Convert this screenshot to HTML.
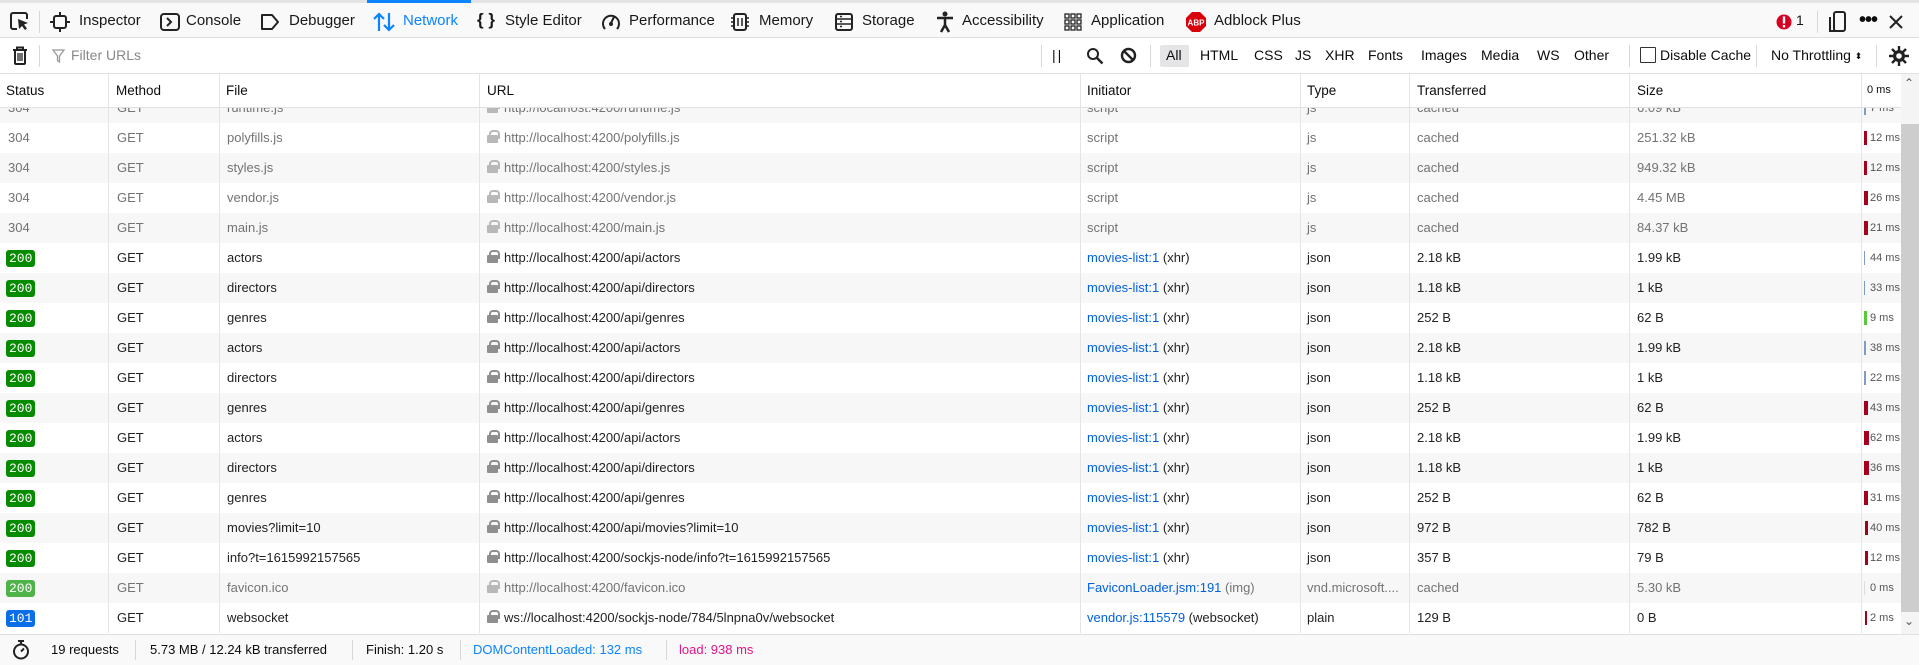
<!DOCTYPE html>
<html><head><meta charset="utf-8"><style>
*{box-sizing:border-box;margin:0;padding:0}
body{width:1919px;height:665px;overflow:hidden;background:#fff;font-family:"Liberation Sans",sans-serif;font-size:14px;color:#0c0c0d;position:relative}
.a{position:absolute;white-space:nowrap}
#tb{position:absolute;left:0;top:0;width:1919px;height:38px;background:#f9f9fa;border-top:3px solid #e4e4e6;border-bottom:1px solid #e0e0e2}
#fb{position:absolute;left:0;top:38px;width:1919px;height:36px;background:#fff;border-bottom:1px solid #e0e0e2}
.t{top:9px;font-size:15px;color:#18181a}
.sep{position:absolute;width:1px;background:#d7d7db}
#hd{position:absolute;left:0;top:74px;width:1901px;height:34px;background:#fff;border-bottom:1px solid #e0e0e2;z-index:2;font-size:13.5px}
.row{position:absolute;left:0;width:1901px;height:30px;font-size:13px;color:#222}
.row.g{background:#f7f7f7}
.c{position:absolute;top:0;height:30px;line-height:30px;white-space:nowrap;overflow:hidden;border-right:1px solid #e4e4e6}
.row.gr{color:#737373}
.b{display:inline-block;color:#fff;font-family:"Liberation Mono",monospace;font-size:13px;line-height:17px;padding:0 3px;border-radius:3px;margin-top:6px;background:#058b00}
.lk{display:inline-block;width:11px;height:13px;margin-right:6px;vertical-align:-1px;position:relative}
.lk:before{content:"";position:absolute;left:2px;top:0;width:7px;height:7px;border:2px solid #8f8f8f;border-radius:4px 4px 0 0;border-bottom:none}
.lk:after{content:"";position:absolute;left:0;top:5px;width:11px;height:8px;background:#8f8f8f;border-radius:1px}
.lk.l:before{border-color:#b8b8b8}.lk.l:after{background:#b8b8b8}
.u{color:#0060df}
.w{font-size:11px;padding-left:8px;position:relative;color:#555!important}
.w i{position:absolute;left:2px;top:8px;height:14px;width:2px}
</style></head><body>
<div id="tb"></div>
<div class="a" style="left:367px;top:0;width:104px;height:3px;background:#0a84ff"></div>
<div style="position:absolute;left:0;top:3px;width:1919px;height:35px">
<svg class="a" style="left:9px;top:8px" width="22" height="22" viewBox="0 0 22 22"><path d="M8 18H4a2 2 0 0 1-2-2V4a2 2 0 0 1 2-2h12a2 2 0 0 1 2 2v4" fill="none" stroke="#222" stroke-width="2"/><path d="M9 8l10 4-4 1.5 3 4-2 1.5-3-4-3 3z" fill="#222"/></svg>
<div class="sep" style="left:39px;top:8px;height:22px"></div>
<svg class="a" style="left:50px;top:9px" width="20" height="20" viewBox="0 0 20 20"><rect x="4" y="4" width="12" height="12" rx="2" fill="none" stroke="#222" stroke-width="2"/><path d="M10 0v4M10 16v4M0 10h4M16 10h4" stroke="#222" stroke-width="2"/></svg>
<div class="a t" style="left:79px">Inspector</div>
<svg class="a" style="left:160px;top:9px" width="20" height="20" viewBox="0 0 20 20"><rect x="1" y="2" width="18" height="16" rx="3" fill="none" stroke="#222" stroke-width="2"/><path d="M7 6l4 4-4 4" fill="none" stroke="#222" stroke-width="2"/></svg>
<div class="a t" style="left:186px">Console</div>
<svg class="a" style="left:260px;top:10px" width="20" height="18" viewBox="0 0 20 18"><path d="M2 2h10l6 7-6 7H2z" fill="none" stroke="#222" stroke-width="2" stroke-linejoin="round"/></svg>
<div class="a t" style="left:289px">Debugger</div>
<svg class="a" style="left:373px;top:9px" width="22" height="20" viewBox="0 0 22 20"><path d="M6 19V2M1 7l5-5 5 5M16 1v17M11 13l5 5 5-5" fill="none" stroke="#0a84ff" stroke-width="2.2"/></svg>
<div class="a t" style="left:403px;color:#0a84ff">Network</div>
<div class="a t" style="left:477px;font-weight:bold;font-size:17px;top:7px">{ }</div>
<div class="a t" style="left:505px">Style Editor</div>
<svg class="a" style="left:601px;top:9px" width="20" height="20" viewBox="0 0 20 20"><path d="M4 17A8 8 0 1 1 16 17" fill="none" stroke="#222" stroke-width="2"/><path d="M10 11l3-6" stroke="#222" stroke-width="2"/><circle cx="10" cy="12" r="2" fill="#222"/></svg>
<div class="a t" style="left:629px">Performance</div>
<svg class="a" style="left:730px;top:9px" width="20" height="20" viewBox="0 0 20 20"><rect x="4" y="2" width="12" height="16" rx="2" fill="none" stroke="#222" stroke-width="2"/><path d="M1 6h3M1 10h3M1 14h3M16 6h3M16 10h3M16 14h3M8 6v8M12 6v8" stroke="#222" stroke-width="1.5"/></svg>
<div class="a t" style="left:759px">Memory</div>
<svg class="a" style="left:834px;top:9px" width="20" height="20" viewBox="0 0 20 20"><rect x="2" y="2" width="16" height="16" rx="2" fill="none" stroke="#222" stroke-width="2"/><path d="M2 7h16M2 12h16M6 4.5h2M6 9.5h2M6 14.5h2" stroke="#222" stroke-width="1.6"/></svg>
<div class="a t" style="left:862px">Storage</div>
<svg class="a" style="left:935px;top:8px" width="20" height="22" viewBox="0 0 20 22"><circle cx="10" cy="3" r="2.5" fill="#222"/><path d="M2 7h16M10 7v7M10 14l-4 7M10 14l4 7" stroke="#222" stroke-width="2.5" fill="none"/></svg>
<div class="a t" style="left:962px">Accessibility</div>
<svg class="a" style="left:1064px;top:10px" width="18" height="18" viewBox="0 0 18 18" fill="none" stroke="#222" stroke-width="1.3"><rect x="1" y="1" width="4" height="4"/><rect x="7" y="1" width="4" height="4"/><rect x="13" y="1" width="4" height="4"/><rect x="1" y="7" width="4" height="4"/><rect x="7" y="7" width="4" height="4"/><rect x="13" y="7" width="4" height="4"/><rect x="1" y="13" width="4" height="4"/><rect x="7" y="13" width="4" height="4"/><rect x="13" y="13" width="4" height="4"/></svg>
<div class="a t" style="left:1091px">Application</div>
<svg class="a" style="left:1185px;top:8px" width="22" height="22" viewBox="0 0 22 22"><path d="M7 1h8l6 6v8l-6 6H7l-6-6V7z" fill="#d8000c"/><text x="11" y="14.5" font-size="8" font-weight="bold" fill="#fff" text-anchor="middle" font-family="Liberation Sans">ABP</text></svg>
<div class="a t" style="left:1214px">Adblock Plus</div>
<svg class="a" style="left:1776px;top:10px" width="16" height="18" viewBox="0 0 16 18"><circle cx="8" cy="9" r="7.5" fill="#d70022"/><rect x="6.8" y="3.5" width="2.4" height="7" fill="#fff"/><rect x="6.8" y="12" width="2.4" height="2.4" fill="#fff"/></svg>
<div class="a t" style="left:1796px;font-size:14px">1</div>
<div class="sep" style="left:1817px;top:8px;height:22px"></div>
<svg class="a" style="left:1829px;top:8px" width="18" height="22" viewBox="0 0 18 22"><rect x="5" y="1" width="11" height="19" rx="2" fill="none" stroke="#222" stroke-width="2"/><path d="M1 6v14h6" fill="none" stroke="#222" stroke-width="2"/></svg>
<div class="a" style="left:1859px;top:6px;font-size:20px;font-weight:bold;letter-spacing:-1px">•••</div>
<svg class="a" style="left:1888px;top:11px" width="16" height="16" viewBox="0 0 16 16"><path d="M2 2l12 12M14 2L2 14" stroke="#222" stroke-width="2"/></svg>
</div>

<div id="fb"></div>
<svg class="a" style="left:12px;top:46px" width="16" height="19" viewBox="0 0 16 19"><path d="M1 4h14M5 4V1.5h6V4" fill="none" stroke="#222" stroke-width="2"/><path d="M3 4h10v13a1 1 0 0 1-1 1H4a1 1 0 0 1-1-1z" fill="none" stroke="#222" stroke-width="2"/><path d="M6 7v8M8 7v8M10 7v8" stroke="#222" stroke-width="1.3"/></svg>
<div class="sep" style="left:39px;top:45px;height:22px"></div>
<svg class="a" style="left:52px;top:49px" width="13" height="14" viewBox="0 0 13 14"><path d="M1 1h11L7.5 7v6l-2-1.5V7z" fill="none" stroke="#999" stroke-width="1.3"/></svg>
<div class="a" style="left:71px;top:47px;font-size:14px;color:#888">Filter URLs</div>
<div class="sep" style="left:1041px;top:45px;height:22px"></div>
<div class="a" style="left:1052px;top:47px;font-size:14px;letter-spacing:2px">||</div>
<svg class="a" style="left:1086px;top:47px" width="18" height="18" viewBox="0 0 18 18"><circle cx="7" cy="7" r="5" fill="none" stroke="#222" stroke-width="2"/><path d="M10.5 10.5l6 6" stroke="#222" stroke-width="2.4"/></svg>
<svg class="a" style="left:1120px;top:47px" width="17" height="17" viewBox="0 0 17 17"><circle cx="8.5" cy="8.5" r="6.5" fill="none" stroke="#222" stroke-width="2.4"/><path d="M4 4l9 9" stroke="#222" stroke-width="2.4"/></svg>
<div class="sep" style="left:1150px;top:45px;height:22px"></div>
<div class="a" style="left:1160px;top:45px;width:29px;height:22px;background:#e5e5e7;border-radius:2px"></div>
<div class="a" style="left:1166px;top:47px;font-size:14px">All</div>
<div class="a" style="left:1200px;top:47px;font-size:14px">HTML</div>
<div class="a" style="left:1254px;top:47px;font-size:14px">CSS</div>
<div class="a" style="left:1295px;top:47px;font-size:14px">JS</div>
<div class="a" style="left:1325px;top:47px;font-size:14px">XHR</div>
<div class="a" style="left:1368px;top:47px;font-size:14px">Fonts</div>
<div class="a" style="left:1421px;top:47px;font-size:14px">Images</div>
<div class="a" style="left:1481px;top:47px;font-size:14px">Media</div>
<div class="a" style="left:1537px;top:47px;font-size:14px">WS</div>
<div class="a" style="left:1574px;top:47px;font-size:14px">Other</div>
<div class="sep" style="left:1629px;top:45px;height:22px"></div>
<div class="a" style="left:1640px;top:47px;width:16px;height:16px;border:1px solid #333;border-radius:1px;background:#fff"></div>
<div class="a" style="left:1660px;top:47px;font-size:14px">Disable Cache</div>
<div class="sep" style="left:1756px;top:45px;height:22px"></div>
<div class="a" style="left:1771px;top:47px;font-size:14px">No Throttling <span style="font-size:9px;vertical-align:1px">⬍</span></div>
<div class="sep" style="left:1876px;top:45px;height:22px"></div>
<svg class="a" style="left:1888px;top:45px" width="22" height="22" viewBox="0 0 22 22"><g stroke="#222" stroke-width="2.4"><path d="M11 1v20M1 11h20M4 4l14 14M18 4L4 18"/></g><circle cx="11" cy="11" r="6" fill="#222"/><circle cx="11" cy="11" r="2.8" fill="#fff"/></svg>

<div id="hd">
<div class="c" style="left:0;width:109px;height:33px;line-height:33px;padding-left:6px">Status</div>
<div class="c" style="left:109px;width:111px;height:33px;line-height:33px;padding-left:7px">Method</div>
<div class="c" style="left:220px;width:260px;height:33px;line-height:33px;padding-left:6px">File</div>
<div class="c" style="left:480px;width:601px;height:33px;line-height:33px;padding-left:7px">URL</div>
<div class="c" style="left:1081px;width:220px;height:33px;line-height:33px;padding-left:6px">Initiator</div>
<div class="c" style="left:1301px;width:109px;height:33px;line-height:33px;padding-left:6px">Type</div>
<div class="c" style="left:1410px;width:220px;height:33px;line-height:33px;padding-left:7px">Transferred</div>
<div class="c" style="left:1630px;width:232px;height:33px;line-height:33px;padding-left:7px">Size</div>
<div class="c" style="left:1862px;width:39px;height:33px;line-height:33px;padding-left:5px;font-size:11px;border:none">0 ms</div>
</div>

<div style="position:absolute;left:0;top:108px;width:1901px;height:526px;overflow:hidden">
<div style="position:absolute;left:0;top:-15px">
<div class="row g gr" style="top:0"><div class="c" style="left:0;width:109px;padding-left:8px">304</div><div class="c" style="left:109px;width:111px;padding-left:8px">GET</div><div class="c" style="left:220px;width:260px;padding-left:7px">runtime.js</div><div class="c" style="left:480px;width:601px;padding-left:7px"><span class="lk l"></span>http://localhost:4200/runtime.js</div><div class="c" style="left:1081px;width:220px;padding-left:6px">script</div><div class="c" style="left:1301px;width:109px;padding-left:6px">js</div><div class="c" style="left:1410px;width:220px;padding-left:7px">cached</div><div class="c" style="left:1630px;width:232px;padding-left:7px">6.09 kB</div><div class="c w" style="left:1862px;width:39px;border:none"><i style="background:#7d9dc4"></i>7 ms</div></div>
<div class="row gr" style="top:30px"><div class="c" style="left:0;width:109px;padding-left:8px">304</div><div class="c" style="left:109px;width:111px;padding-left:8px">GET</div><div class="c" style="left:220px;width:260px;padding-left:7px">polyfills.js</div><div class="c" style="left:480px;width:601px;padding-left:7px"><span class="lk l"></span>http://localhost:4200/polyfills.js</div><div class="c" style="left:1081px;width:220px;padding-left:6px">script</div><div class="c" style="left:1301px;width:109px;padding-left:6px">js</div><div class="c" style="left:1410px;width:220px;padding-left:7px">cached</div><div class="c" style="left:1630px;width:232px;padding-left:7px">251.32 kB</div><div class="c w" style="left:1862px;width:39px;border:none"><i style="background:#a4001c;width:3px"></i>12 ms</div></div>
<div class="row g gr" style="top:60px"><div class="c" style="left:0;width:109px;padding-left:8px">304</div><div class="c" style="left:109px;width:111px;padding-left:8px">GET</div><div class="c" style="left:220px;width:260px;padding-left:7px">styles.js</div><div class="c" style="left:480px;width:601px;padding-left:7px"><span class="lk l"></span>http://localhost:4200/styles.js</div><div class="c" style="left:1081px;width:220px;padding-left:6px">script</div><div class="c" style="left:1301px;width:109px;padding-left:6px">js</div><div class="c" style="left:1410px;width:220px;padding-left:7px">cached</div><div class="c" style="left:1630px;width:232px;padding-left:7px">949.32 kB</div><div class="c w" style="left:1862px;width:39px;border:none"><i style="background:#a4001c;width:3px"></i>12 ms</div></div>
<div class="row gr" style="top:90px"><div class="c" style="left:0;width:109px;padding-left:8px">304</div><div class="c" style="left:109px;width:111px;padding-left:8px">GET</div><div class="c" style="left:220px;width:260px;padding-left:7px">vendor.js</div><div class="c" style="left:480px;width:601px;padding-left:7px"><span class="lk l"></span>http://localhost:4200/vendor.js</div><div class="c" style="left:1081px;width:220px;padding-left:6px">script</div><div class="c" style="left:1301px;width:109px;padding-left:6px">js</div><div class="c" style="left:1410px;width:220px;padding-left:7px">cached</div><div class="c" style="left:1630px;width:232px;padding-left:7px">4.45 MB</div><div class="c w" style="left:1862px;width:39px;border:none"><i style="background:#a4001c;width:4px"></i>26 ms</div></div>
<div class="row g gr" style="top:120px"><div class="c" style="left:0;width:109px;padding-left:8px">304</div><div class="c" style="left:109px;width:111px;padding-left:8px">GET</div><div class="c" style="left:220px;width:260px;padding-left:7px">main.js</div><div class="c" style="left:480px;width:601px;padding-left:7px"><span class="lk l"></span>http://localhost:4200/main.js</div><div class="c" style="left:1081px;width:220px;padding-left:6px">script</div><div class="c" style="left:1301px;width:109px;padding-left:6px">js</div><div class="c" style="left:1410px;width:220px;padding-left:7px">cached</div><div class="c" style="left:1630px;width:232px;padding-left:7px">84.37 kB</div><div class="c w" style="left:1862px;width:39px;border:none"><i style="background:#a4001c;width:4px"></i>21 ms</div></div>

<div class="row" style="top:150px"><div class="c" style="left:0;width:109px;padding-left:6px"><span class="b">200</span></div><div class="c" style="left:109px;width:111px;padding-left:8px">GET</div><div class="c" style="left:220px;width:260px;padding-left:7px">actors</div><div class="c" style="left:480px;width:601px;padding-left:7px"><span class="lk"></span>http://localhost:4200/api/actors</div><div class="c" style="left:1081px;width:220px;padding-left:6px"><span class="u">movies-list:1</span> (xhr)</div><div class="c" style="left:1301px;width:109px;padding-left:6px">json</div><div class="c" style="left:1410px;width:220px;padding-left:7px">2.18 kB</div><div class="c" style="left:1630px;width:232px;padding-left:7px">1.99 kB</div><div class="c w" style="left:1862px;width:39px;border:none"><i style="background:#7d9dc4;width:1px"></i>44 ms</div></div>
<div class="row g" style="top:180px"><div class="c" style="left:0;width:109px;padding-left:6px"><span class="b">200</span></div><div class="c" style="left:109px;width:111px;padding-left:8px">GET</div><div class="c" style="left:220px;width:260px;padding-left:7px">directors</div><div class="c" style="left:480px;width:601px;padding-left:7px"><span class="lk"></span>http://localhost:4200/api/directors</div><div class="c" style="left:1081px;width:220px;padding-left:6px"><span class="u">movies-list:1</span> (xhr)</div><div class="c" style="left:1301px;width:109px;padding-left:6px">json</div><div class="c" style="left:1410px;width:220px;padding-left:7px">1.18 kB</div><div class="c" style="left:1630px;width:232px;padding-left:7px">1 kB</div><div class="c w" style="left:1862px;width:39px;border:none"><i style="background:#7d9dc4;width:1px"></i>33 ms</div></div>
<div class="row" style="top:210px"><div class="c" style="left:0;width:109px;padding-left:6px"><span class="b">200</span></div><div class="c" style="left:109px;width:111px;padding-left:8px">GET</div><div class="c" style="left:220px;width:260px;padding-left:7px">genres</div><div class="c" style="left:480px;width:601px;padding-left:7px"><span class="lk"></span>http://localhost:4200/api/genres</div><div class="c" style="left:1081px;width:220px;padding-left:6px"><span class="u">movies-list:1</span> (xhr)</div><div class="c" style="left:1301px;width:109px;padding-left:6px">json</div><div class="c" style="left:1410px;width:220px;padding-left:7px">252 B</div><div class="c" style="left:1630px;width:232px;padding-left:7px">62 B</div><div class="c w" style="left:1862px;width:39px;border:none"><i style="background:#5bc73b;width:3px"></i>9 ms</div></div>
<div class="row g" style="top:240px"><div class="c" style="left:0;width:109px;padding-left:6px"><span class="b">200</span></div><div class="c" style="left:109px;width:111px;padding-left:8px">GET</div><div class="c" style="left:220px;width:260px;padding-left:7px">actors</div><div class="c" style="left:480px;width:601px;padding-left:7px"><span class="lk"></span>http://localhost:4200/api/actors</div><div class="c" style="left:1081px;width:220px;padding-left:6px"><span class="u">movies-list:1</span> (xhr)</div><div class="c" style="left:1301px;width:109px;padding-left:6px">json</div><div class="c" style="left:1410px;width:220px;padding-left:7px">2.18 kB</div><div class="c" style="left:1630px;width:232px;padding-left:7px">1.99 kB</div><div class="c w" style="left:1862px;width:39px;border:none"><i style="background:#7d9dc4"></i>38 ms</div></div>
<div class="row" style="top:270px"><div class="c" style="left:0;width:109px;padding-left:6px"><span class="b">200</span></div><div class="c" style="left:109px;width:111px;padding-left:8px">GET</div><div class="c" style="left:220px;width:260px;padding-left:7px">directors</div><div class="c" style="left:480px;width:601px;padding-left:7px"><span class="lk"></span>http://localhost:4200/api/directors</div><div class="c" style="left:1081px;width:220px;padding-left:6px"><span class="u">movies-list:1</span> (xhr)</div><div class="c" style="left:1301px;width:109px;padding-left:6px">json</div><div class="c" style="left:1410px;width:220px;padding-left:7px">1.18 kB</div><div class="c" style="left:1630px;width:232px;padding-left:7px">1 kB</div><div class="c w" style="left:1862px;width:39px;border:none"><i style="background:#7d9dc4"></i>22 ms</div></div>
<div class="row g" style="top:300px"><div class="c" style="left:0;width:109px;padding-left:6px"><span class="b">200</span></div><div class="c" style="left:109px;width:111px;padding-left:8px">GET</div><div class="c" style="left:220px;width:260px;padding-left:7px">genres</div><div class="c" style="left:480px;width:601px;padding-left:7px"><span class="lk"></span>http://localhost:4200/api/genres</div><div class="c" style="left:1081px;width:220px;padding-left:6px"><span class="u">movies-list:1</span> (xhr)</div><div class="c" style="left:1301px;width:109px;padding-left:6px">json</div><div class="c" style="left:1410px;width:220px;padding-left:7px">252 B</div><div class="c" style="left:1630px;width:232px;padding-left:7px">62 B</div><div class="c w" style="left:1862px;width:39px;border:none"><i style="background:#a4001c;width:4px"></i>43 ms</div></div>
<div class="row" style="top:330px"><div class="c" style="left:0;width:109px;padding-left:6px"><span class="b">200</span></div><div class="c" style="left:109px;width:111px;padding-left:8px">GET</div><div class="c" style="left:220px;width:260px;padding-left:7px">actors</div><div class="c" style="left:480px;width:601px;padding-left:7px"><span class="lk"></span>http://localhost:4200/api/actors</div><div class="c" style="left:1081px;width:220px;padding-left:6px"><span class="u">movies-list:1</span> (xhr)</div><div class="c" style="left:1301px;width:109px;padding-left:6px">json</div><div class="c" style="left:1410px;width:220px;padding-left:7px">2.18 kB</div><div class="c" style="left:1630px;width:232px;padding-left:7px">1.99 kB</div><div class="c w" style="left:1862px;width:39px;border:none"><i style="background:#a4001c;width:5px"></i>62 ms</div></div>
<div class="row g" style="top:360px"><div class="c" style="left:0;width:109px;padding-left:6px"><span class="b">200</span></div><div class="c" style="left:109px;width:111px;padding-left:8px">GET</div><div class="c" style="left:220px;width:260px;padding-left:7px">directors</div><div class="c" style="left:480px;width:601px;padding-left:7px"><span class="lk"></span>http://localhost:4200/api/directors</div><div class="c" style="left:1081px;width:220px;padding-left:6px"><span class="u">movies-list:1</span> (xhr)</div><div class="c" style="left:1301px;width:109px;padding-left:6px">json</div><div class="c" style="left:1410px;width:220px;padding-left:7px">1.18 kB</div><div class="c" style="left:1630px;width:232px;padding-left:7px">1 kB</div><div class="c w" style="left:1862px;width:39px;border:none"><i style="background:#a4001c;width:5px"></i>36 ms</div></div>
<div class="row" style="top:390px"><div class="c" style="left:0;width:109px;padding-left:6px"><span class="b">200</span></div><div class="c" style="left:109px;width:111px;padding-left:8px">GET</div><div class="c" style="left:220px;width:260px;padding-left:7px">genres</div><div class="c" style="left:480px;width:601px;padding-left:7px"><span class="lk"></span>http://localhost:4200/api/genres</div><div class="c" style="left:1081px;width:220px;padding-left:6px"><span class="u">movies-list:1</span> (xhr)</div><div class="c" style="left:1301px;width:109px;padding-left:6px">json</div><div class="c" style="left:1410px;width:220px;padding-left:7px">252 B</div><div class="c" style="left:1630px;width:232px;padding-left:7px">62 B</div><div class="c w" style="left:1862px;width:39px;border:none"><i style="background:#a4001c;width:4px"></i>31 ms</div></div>
<div class="row g" style="top:420px"><div class="c" style="left:0;width:109px;padding-left:6px"><span class="b">200</span></div><div class="c" style="left:109px;width:111px;padding-left:8px">GET</div><div class="c" style="left:220px;width:260px;padding-left:7px">movies?limit=10</div><div class="c" style="left:480px;width:601px;padding-left:7px"><span class="lk"></span>http://localhost:4200/api/movies?limit=10</div><div class="c" style="left:1081px;width:220px;padding-left:6px"><span class="u">movies-list:1</span> (xhr)</div><div class="c" style="left:1301px;width:109px;padding-left:6px">json</div><div class="c" style="left:1410px;width:220px;padding-left:7px">972 B</div><div class="c" style="left:1630px;width:232px;padding-left:7px">782 B</div><div class="c w" style="left:1862px;width:39px;border:none"><i style="background:#a4001c;width:3px;left:3px"></i>40 ms</div></div>
<div class="row" style="top:450px"><div class="c" style="left:0;width:109px;padding-left:6px"><span class="b">200</span></div><div class="c" style="left:109px;width:111px;padding-left:8px">GET</div><div class="c" style="left:220px;width:260px;padding-left:7px">info?t=1615992157565</div><div class="c" style="left:480px;width:601px;padding-left:7px"><span class="lk"></span>http://localhost:4200/sockjs-node/info?t=1615992157565</div><div class="c" style="left:1081px;width:220px;padding-left:6px"><span class="u">movies-list:1</span> (xhr)</div><div class="c" style="left:1301px;width:109px;padding-left:6px">json</div><div class="c" style="left:1410px;width:220px;padding-left:7px">357 B</div><div class="c" style="left:1630px;width:232px;padding-left:7px">79 B</div><div class="c w" style="left:1862px;width:39px;border:none"><i style="background:#a4001c;width:3px;left:3px"></i>12 ms</div></div>
<div class="row g gr" style="top:480px"><div class="c" style="left:0;width:109px;padding-left:6px"><span class="b" style="background:#4fb34a">200</span></div><div class="c" style="left:109px;width:111px;padding-left:8px">GET</div><div class="c" style="left:220px;width:260px;padding-left:7px">favicon.ico</div><div class="c" style="left:480px;width:601px;padding-left:7px"><span class="lk l"></span>http://localhost:4200/favicon.ico</div><div class="c" style="left:1081px;width:220px;padding-left:6px"><span class="u">FaviconLoader.jsm:191</span> (img)</div><div class="c" style="left:1301px;width:109px;padding-left:6px">vnd.microsoft....</div><div class="c" style="left:1410px;width:220px;padding-left:7px">cached</div><div class="c" style="left:1630px;width:232px;padding-left:7px">5.30 kB</div><div class="c w" style="left:1862px;width:39px;border:none"><i style="background:#ddd;width:1px"></i>0 ms</div></div>
<div class="row" style="top:510px"><div class="c" style="left:0;width:109px;padding-left:6px"><span class="b" style="background:#0a6ee8">101</span></div><div class="c" style="left:109px;width:111px;padding-left:8px">GET</div><div class="c" style="left:220px;width:260px;padding-left:7px">websocket</div><div class="c" style="left:480px;width:601px;padding-left:7px"><span class="lk"></span>ws://localhost:4200/sockjs-node/784/5lnpna0v/websocket</div><div class="c" style="left:1081px;width:220px;padding-left:6px"><span class="u">vendor.js:115579</span> (websocket)</div><div class="c" style="left:1301px;width:109px;padding-left:6px">plain</div><div class="c" style="left:1410px;width:220px;padding-left:7px">129 B</div><div class="c" style="left:1630px;width:232px;padding-left:7px">0 B</div><div class="c w" style="left:1862px;width:39px;border:none"><i style="background:#a4001c;width:2px;left:3px"></i>2 ms</div></div>
</div></div>

<div class="a" style="left:1901px;top:74px;width:18px;height:560px;background:#f4f4f4"></div>
<div class="a" style="left:1901px;top:124px;width:18px;height:488px;background:#cdcdcd"></div>
<div class="a" style="left:1904px;top:76px;font-size:12px;color:#555">⌃</div>
<div class="a" style="left:1904px;top:614px;font-size:12px;color:#555">⌄</div>

<div class="a" style="left:0;top:634px;width:1919px;height:31px;background:#f9f9fa;border-top:1px solid #e0e0e2"></div>
<svg class="a" style="left:12px;top:640px" width="18" height="20" viewBox="0 0 18 20"><circle cx="9" cy="11.5" r="7" fill="none" stroke="#222" stroke-width="2"/><path d="M6 1h6M9 1v3M9 11.5l3-3" stroke="#222" stroke-width="2"/></svg>
<div class="a" style="left:51px;top:642px;font-size:13px">19 requests</div>
<div class="sep" style="left:135px;top:640px;height:20px"></div>
<div class="a" style="left:150px;top:642px;font-size:13px">5.73 MB / 12.24 kB transferred</div>
<div class="sep" style="left:352px;top:640px;height:20px"></div>
<div class="a" style="left:366px;top:642px;font-size:13px">Finish: 1.20 s</div>
<div class="sep" style="left:460px;top:640px;height:20px"></div>
<div class="a" style="left:473px;top:642px;font-size:13px;color:#0a84ff">DOMContentLoaded: 132 ms</div>
<div class="sep" style="left:666px;top:640px;height:20px"></div>
<div class="a" style="left:679px;top:642px;font-size:13px;color:#e31587">load: 938 ms</div>
</body></html>
